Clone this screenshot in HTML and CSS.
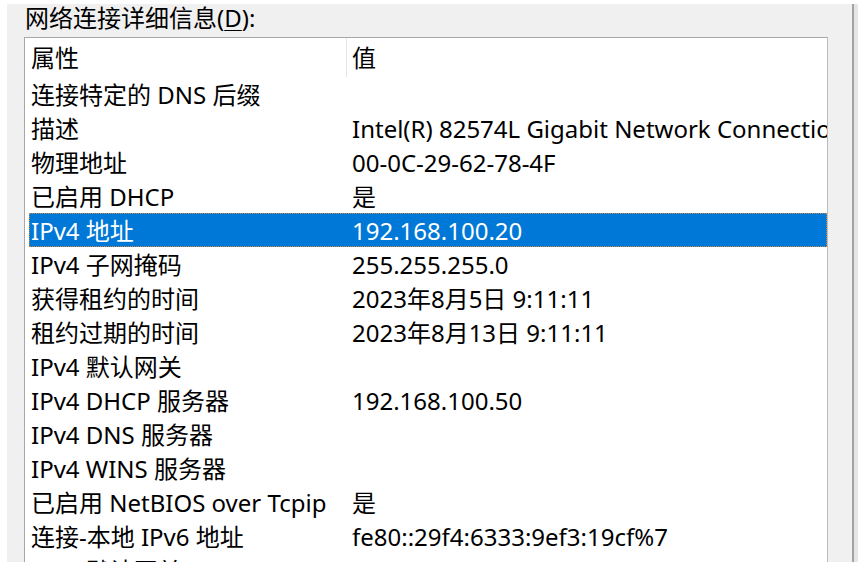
FILE: index.html
```html
<!DOCTYPE html>
<html lang="zh-CN">
<head>
<meta charset="utf-8">
<title>网络连接详细信息</title>
<link rel="stylesheet" href="styles.css">
</head>
<body>
<div class="screen">
  <div class="dialog">
    <div class="label">网络连接详细信息(<span class="ak">D</span>):</div>
    <div class="list">
      <div class="head"><div class="c1">属性</div><div class="c2">值</div></div>
      <div class="row"><div class="c1">连接特定的 DNS 后缀</div><div class="c2"></div></div>
      <div class="row"><div class="c1">描述</div><div class="c2">Intel(R) 82574L Gigabit Network Connection</div></div>
      <div class="row"><div class="c1">物理地址</div><div class="c2">00-0C-29-62-78-4F</div></div>
      <div class="row"><div class="c1">已启用 DHCP</div><div class="c2">是</div></div>
      <div class="row sel"><div class="c1">IPv4 地址</div><div class="c2">192.168.100.20</div></div>
      <div class="row"><div class="c1">IPv4 子网掩码</div><div class="c2">255.255.255.0</div></div>
      <div class="row"><div class="c1">获得租约的时间</div><div class="c2">2023年8月5日 9:11:11</div></div>
      <div class="row"><div class="c1">租约过期的时间</div><div class="c2">2023年8月13日 9:11:11</div></div>
      <div class="row"><div class="c1">IPv4 默认网关</div><div class="c2"></div></div>
      <div class="row"><div class="c1">IPv4 DHCP 服务器</div><div class="c2">192.168.100.50</div></div>
      <div class="row"><div class="c1">IPv4 DNS 服务器</div><div class="c2"></div></div>
      <div class="row"><div class="c1">IPv4 WINS 服务器</div><div class="c2"></div></div>
      <div class="row"><div class="c1">已启用 NetBIOS over Tcpip</div><div class="c2">是</div></div>
      <div class="row"><div class="c1">连接-本地 IPv6 地址</div><div class="c2">fe80::29f4:6333:9ef3:19cf%7</div></div>
      <div class="row"><div class="c1">IPv6 默认网关</div><div class="c2"></div></div>
    </div>
  </div>
  <div class="edge"></div>
</div>
</body>
</html>
```
FILE: styles.css
```css
html, body {
  margin: 0;
  padding: 0;
  background: #ffffff;
}

body {
  width: 858px;
  height: 586px;
  overflow: hidden;
  font-family: "Noto Sans", "Noto Sans CJK SC", sans-serif;
  font-size: 24px;
  color: #000000;
}

.screen {
  display: flex;
  padding: 4px 0 0 7px;
}

.dialog {
  width: 845px;
  height: 558px;
  box-sizing: border-box;
  padding-left: 17px;
  background: #f0f0f0;
}

.edge {
  width: 4px;
  height: 558px;
  border-left: 2px solid #a3a3a3;
  background: #e6e6e6;
}

.label {
  height: 32px;
  line-height: 32px;
  margin-top: -2px;
  padding-left: 1px;
  margin-bottom: 3px;
  white-space: nowrap;
}

.ak {
  text-decoration: underline;
  text-underline-offset: 3px;
  text-decoration-thickness: 1px;
}

.list {
  width: 804px;
  height: 525px;
  box-sizing: border-box;
  border: 1px solid #a7a7a7;
  border-right-color: #b9bcc2;
  border-bottom: none;
  background: #ffffff;
  overflow: hidden;
}

.head,
.row {
  display: flex;
  margin-left: 4px;
  white-space: nowrap;
}

.head {
  height: 39px;
  line-height: 40px;
}

.row {
  height: 34px;
  line-height: 35px;
}

.c1 {
  width: 317px;
  flex: none;
  box-sizing: border-box;
  padding-left: 2px;
  overflow: hidden;
}

.c2 {
  flex: 1;
  min-width: 0;
  padding-left: 6px;
  overflow: hidden;
}

.head .c2 {
  border-left: 1px solid #e5e5e5;
  padding-left: 5px;
}

.row.sel {
  background: #0078d7;
  color: #ffffff;
  outline: 1px dotted #c9884a;
  outline-offset: -1px;
}
```
